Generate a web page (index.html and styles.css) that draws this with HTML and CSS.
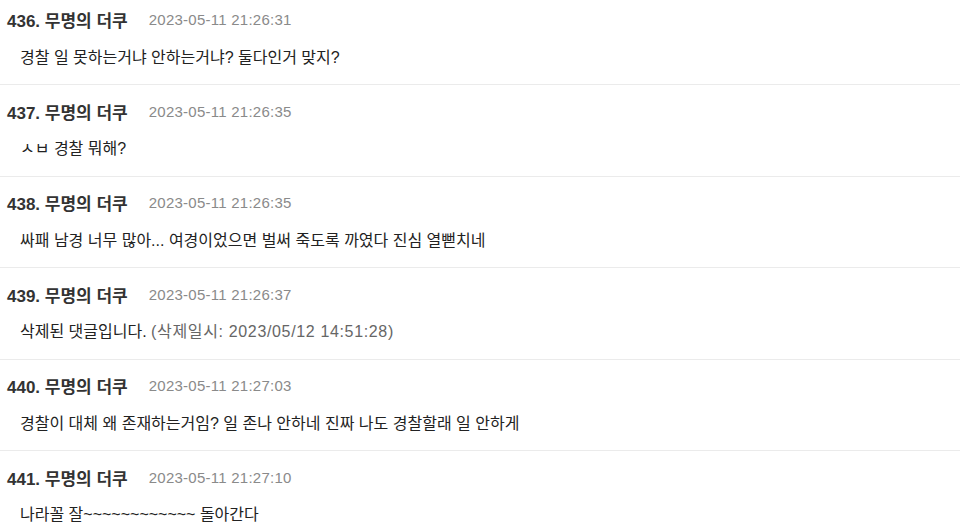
FILE: index.html
```html
<!DOCTYPE html>
<html lang="ko">
<head>
<meta charset="utf-8">
<link rel="stylesheet" href="styles.css">
</head>
<body>
<ul class="comments">
  <li class="comment">
    <div class="head"><span class="name">436. 무명의 더쿠</span><span class="date">2023-05-11 21:26:31</span></div>
    <div class="text">경찰 일 못하는거냐 안하는거냐? 둘다인거 맞지?</div>
  </li>
  <li class="comment">
    <div class="head"><span class="name">437. 무명의 더쿠</span><span class="date">2023-05-11 21:26:35</span></div>
    <div class="text">ㅅㅂ 경찰 뭐해?</div>
  </li>
  <li class="comment">
    <div class="head"><span class="name">438. 무명의 더쿠</span><span class="date">2023-05-11 21:26:35</span></div>
    <div class="text">싸패 남경 너무 많아... 여경이었으면 벌써 죽도록 까였다 진심 열뻗치네</div>
  </li>
  <li class="comment">
    <div class="head"><span class="name">439. 무명의 더쿠</span><span class="date">2023-05-11 21:26:37</span></div>
    <div class="text">삭제된 댓글입니다. <span class="deleted">(삭제일시: 2023/05/12 14:51:28)</span></div>
  </li>
  <li class="comment">
    <div class="head"><span class="name">440. 무명의 더쿠</span><span class="date">2023-05-11 21:27:03</span></div>
    <div class="text">경찰이 대체 왜 존재하는거임? 일 존나 안하네 진짜 나도 경찰할래 일 안하게</div>
  </li>
  <li class="comment">
    <div class="head"><span class="name">441. 무명의 더쿠</span><span class="date">2023-05-11 21:27:10</span></div>
    <div class="text">나라꼴 잘~~~~~~~~~~~~ 돌아간다</div>
  </li>
</ul>
</body>
</html>
```
FILE: styles.css
```css
html, body {
  margin: 0;
  padding: 0;
  background: #fff;
}
body {
  font-family: "Liberation Sans", "Noto Sans CJK KR", sans-serif;
  color: #222;
}
.comments {
  list-style: none;
  margin: -6.5px 0 0 0;
  padding: 0;
}
.comment {
  padding: 16px 0 16.5px 0;
  border-bottom: 1px solid #ebebeb;
}
.head {
  display: flex;
  align-items: center;
  height: 20px;
  padding-left: 7px;
  gap: 21px;
}
.name {
  font-weight: bold;
  font-size: 17px;
  color: #333;
}
.date {
  font-size: 15px;
  letter-spacing: 0.25px;
  color: #8a8a8a;
}
.text {
  margin-top: 18px;
  line-height: 20px;
  font-size: 16px;
  padding-left: 20px;
  color: #222;
}
.deleted {
  color: #666;
  letter-spacing: 0.65px;
}
```
